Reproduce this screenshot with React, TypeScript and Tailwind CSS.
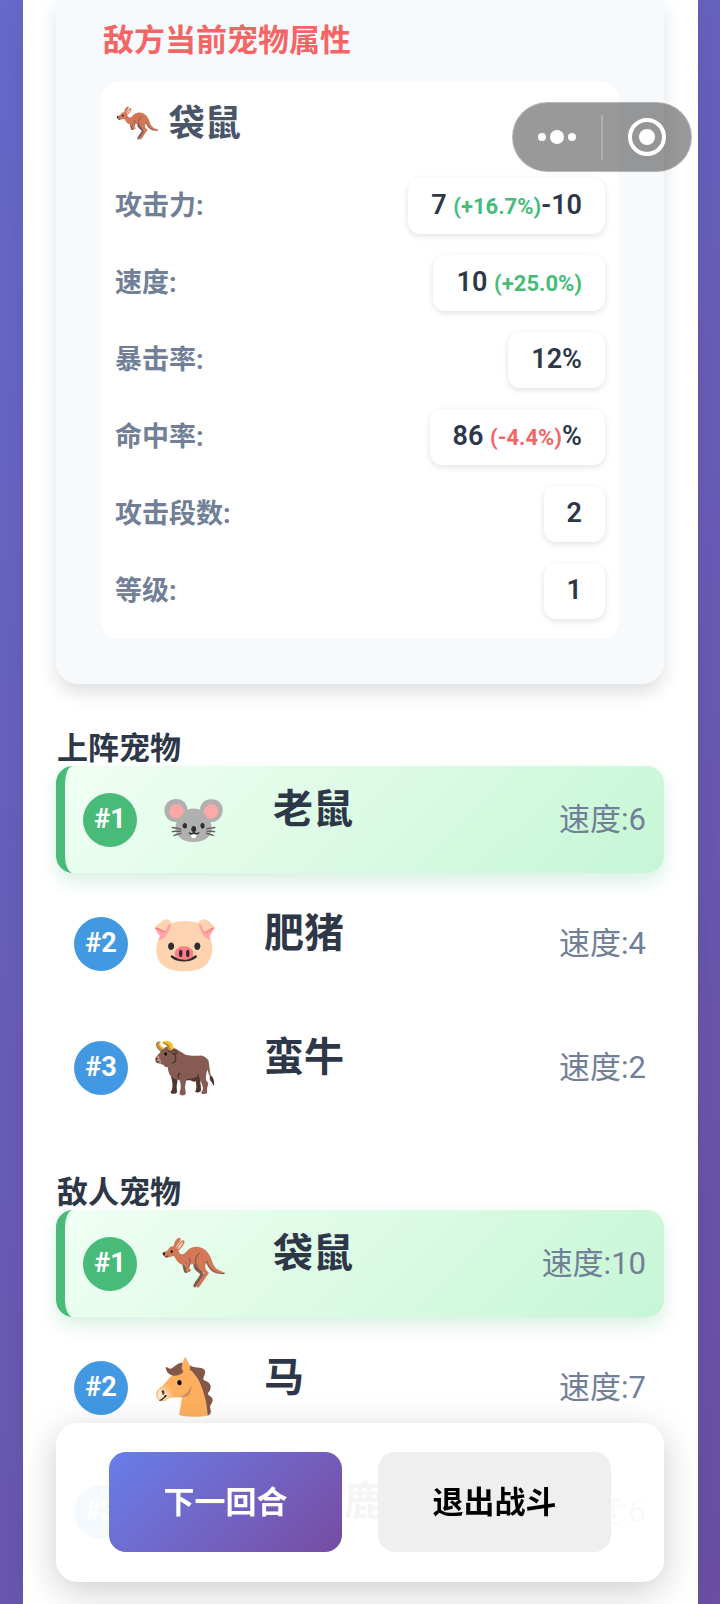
import React from "react";
import clsx from "clsx";

interface Stat {
  label: string;
  value: string;
  change?: string;
  suffix?: string;
}

interface Pet {
  emoji: string;
  name: string;
  speed: number;
}

const stats: Stat[] = [
  { label: "攻击力", value: "7", change: "+16.7%", suffix: "-10" },
  { label: "速度", value: "10", change: "+25.0%" },
  { label: "暴击率", value: "12%" },
  { label: "命中率", value: "86", change: "-4.4%", suffix: "%" },
  { label: "攻击段数", value: "2" },
  { label: "等级", value: "1" },
];

const myPets: Pet[] = [
  { emoji: "🐭", name: "老鼠", speed: 6 },
  { emoji: "🐷", name: "肥猪", speed: 4 },
  { emoji: "🐂", name: "蛮牛", speed: 2 },
];

const enemyPets: Pet[] = [
  { emoji: "🦘", name: "袋鼠", speed: 10 },
  { emoji: "🐴", name: "马", speed: 7 },
  { emoji: "🦌", name: "梅花鹿", speed: 6 },
];

const StatRow = ({ label, value, change, suffix }: Stat) => (
  <div className="flex h-14 items-center justify-between">
    <dt className="text-[27px] font-bold text-[#718096]">{label}:</dt>
    <dd className="flex h-14 items-center whitespace-pre rounded-xl bg-white px-[23px] pb-0.5 text-[27px] font-semibold text-[#2d3748] shadow-[0_2px_6px_rgba(0,0,0,0.12)]">
      <span>
        {value}
        {change && (
          <>
            {" "}
            <span
              className={clsx(
                "text-[22px] font-bold",
                change.startsWith("-") ? "text-[#f56565]" : "text-[#48bb78]"
              )}
            >
              ({change})
            </span>
          </>
        )}
        {suffix}
      </span>
    </dd>
  </div>
);

const PetRow = ({ pet, rank }: { pet: Pet; rank: number }) => {
  const active = rank === 1;

  return (
    <li
      className={clsx(
        "flex h-[107px] items-center rounded-[17px] px-[18px]",
        active &&
          "border-l-9 border-[#48bb78] bg-linear-135 from-[#f0fff4] to-[#c6f6d5] shadow-[0_9px_18px_rgba(72,187,120,0.2)]"
      )}
    >
      <span
        className={clsx(
          "flex size-[54px] shrink-0 items-center justify-center rounded-full text-[27px] font-bold text-white",
          active ? "bg-[#48bb78]" : "bg-[#4299e1]"
        )}
      >
        #{rank}
      </span>
      <span className="ml-[23px] w-[67px] shrink-0 text-[54px] leading-none">
        {pet.emoji}
      </span>
      <strong className="ml-[46px] flex-1 whitespace-nowrap pb-5 text-[40px] leading-none text-[#2d3748]">
        {pet.name}
      </strong>
      <span className="pt-0.5 text-[31px] text-[#718096]">
        速度:{pet.speed}
      </span>
    </li>
  );
};

const PetList = ({ title, pets }: { title: string; pets: Pet[] }) => (
  <section>
    <h2 className="px-px text-[31px] font-bold leading-[35px] text-[#2d3748]">
      {title}
    </h2>
    <ul className="flex flex-col gap-[17px]">
      {pets.map((pet, i) => (
        <PetRow key={pet.name} pet={pet} rank={i + 1} />
      ))}
    </ul>
  </section>
);

// Cápsula flotante con menú y cierre
const Capsule = () => (
  <div className="fixed right-7 top-[102px] z-20 flex h-[70px] w-[180px] items-center rounded-full border border-white/30 bg-black/40 text-white">
    <button type="button" aria-label="更多" className="flex flex-1 justify-center">
      <svg width="40" height="16" viewBox="0 0 40 16" fill="currentColor">
        <circle cx="5" cy="8" r="4" />
        <circle cx="20" cy="8" r="7" />
        <circle cx="35" cy="8" r="4" />
      </svg>
    </button>
    <span className="h-[45px] w-0.5 bg-white/20" />
    <button type="button" aria-label="关闭" className="flex flex-1 justify-center">
      <svg width="40" height="40" viewBox="0 0 40 40" fill="none">
        <circle cx="20" cy="20" r="17" stroke="currentColor" strokeWidth="4" />
        <circle cx="20" cy="20" r="8" fill="currentColor" />
      </svg>
    </button>
  </div>
);

export default function App() {
  return (
    <div className="min-h-screen bg-linear-135 from-[#666bcd] to-[#6b4fa5] pl-[23px] pr-[22px] font-[Roboto,'Noto_Sans_CJK_SC','Noto_Color_Emoji',sans-serif]">
      <main className="min-h-screen bg-white pb-[38px] pl-[33px] pr-[34px] shadow-[0_0_40px_rgba(0,0,0,0.1)]">
        <section className="rounded-b-[22px] bg-[#f7fafc] px-[45px] pb-[45px] pt-5 shadow-[0_9px_18px_rgba(0,0,0,0.12)]">
          <h2 className="px-0.5 text-[31px] font-bold leading-[42px] text-[#f56565]">
            敌方当前宠物属性
          </h2>
          <div className="mt-5 rounded-[17px] bg-white px-[14px] pb-5 pt-[18px]">
            <h3 className="flex h-12 items-center gap-[9px] text-[36px] font-bold text-[#4a5568]">
              <span>🦘</span>
              <span>袋鼠</span>
            </h3>
            <dl className="mt-[30px] flex flex-col gap-[21px]">
              {stats.map((stat) => (
                <StatRow key={stat.label} {...stat} />
              ))}
            </dl>
          </div>
        </section>

        <div className="mt-[47px] flex flex-col gap-[54px]">
          <PetList title="上阵宠物" pets={myPets} />
          <PetList title="敌人宠物" pets={enemyPets} />
        </div>
      </main>

      <footer className="fixed inset-x-14 bottom-[22px] z-10 flex justify-center gap-9 rounded-[22px] bg-white/95 px-[53px] pb-[30px] pt-[29px] shadow-[0_9px_36px_rgba(0,0,0,0.2)]">
        <button
          type="button"
          className="h-[100px] flex-1 rounded-[17px] bg-linear-135 from-[#667eea] to-[#764ba2] pt-0.5 text-[31px] font-bold text-white"
        >
          下一回合
        </button>
        <button
          type="button"
          className="h-[100px] flex-1 rounded-[17px] bg-[#efefef] pt-0.5 text-[31px] font-bold text-black"
        >
          退出战斗
        </button>
      </footer>

      <Capsule />
    </div>
  );
}
